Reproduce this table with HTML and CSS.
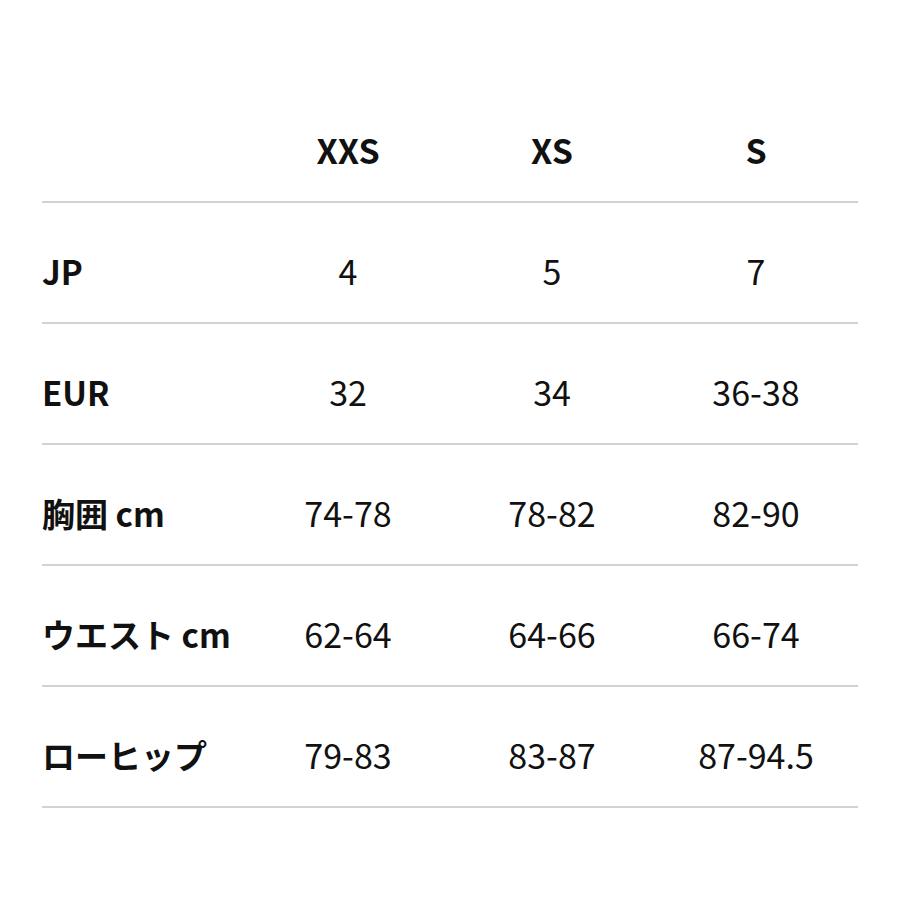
FILE: index.html
```html
<!DOCTYPE html>
<html lang="ja">
<head>
<meta charset="utf-8">
<link rel="stylesheet" href="styles.css">
</head>
<body>
<div class="table">
  <div class="row head">
    <div class="cell label"></div>
    <div class="cell">XXS</div>
    <div class="cell">XS</div>
    <div class="cell">S</div>
  </div>
  <div class="row">
    <div class="cell label">JP</div>
    <div class="cell">4</div>
    <div class="cell">5</div>
    <div class="cell">7</div>
  </div>
  <div class="row">
    <div class="cell label">EUR</div>
    <div class="cell">32</div>
    <div class="cell">34</div>
    <div class="cell">36-38</div>
  </div>
  <div class="row">
    <div class="cell label">胸囲 cm</div>
    <div class="cell">74-78</div>
    <div class="cell">78-82</div>
    <div class="cell">82-90</div>
  </div>
  <div class="row">
    <div class="cell label">ウエスト cm</div>
    <div class="cell">62-64</div>
    <div class="cell">64-66</div>
    <div class="cell">66-74</div>
  </div>
  <div class="row">
    <div class="cell label">ローヒップ</div>
    <div class="cell">79-83</div>
    <div class="cell">83-87</div>
    <div class="cell">87-94.5</div>
  </div>
</div>
</body>
</html>
```
FILE: styles.css
```css
html, body {
  margin: 0;
  padding: 0;
  background: #fff;
}
body {
  font-family: "Noto Sans CJK JP", "Noto Sans", sans-serif;
  color: #111;
}
.table {
  margin: 82px 42px 0 42px;
  width: 816px;
}
.row {
  display: grid;
  grid-template-columns: 204px 204px 204px 204px;
  height: 121px;
  box-sizing: border-box;
  padding-top: 18px;
  border-bottom: 2px solid #d2d2d2;
  align-items: center;
  font-size: 34px;
}
.cell {
  text-align: center;
  line-height: 1.2;
}
.cell.label {
  text-align: left;
  font-weight: 700;
  font-size: 33px;
}
.head .cell {
  font-weight: 700;
}
```
